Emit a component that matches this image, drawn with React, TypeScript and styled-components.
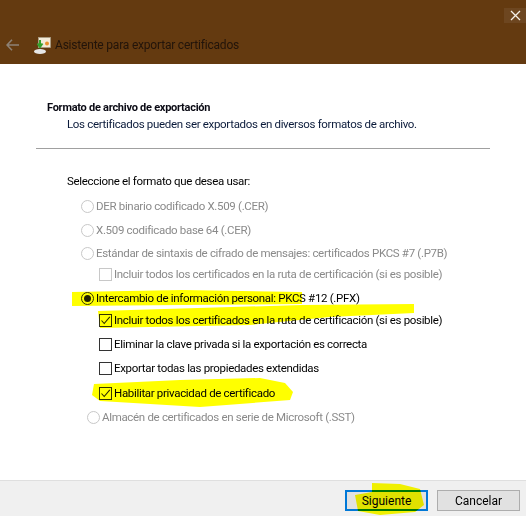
import React from 'react';
import styled, { createGlobalStyle } from 'styled-components';

const GlobalStyle = createGlobalStyle`
    html, body {
        margin: 0;
        padding: 0;
        background: #fff;
    }
    body {
        font-family: Roboto, "Noto Sans", "Liberation Sans", sans-serif;
        font-size: 11.5px;
        letter-spacing: -0.32px;
        color: #000;
    }
`;

const BackArrow = () => (
    <svg width="13" height="12" viewBox="0 0 13 12">
        <path d="M6 0.8 L1 6 L6 11.2 M1.5 6 H13" fill="none" stroke="#8d8175" strokeWidth="1.6" />
    </svg>
);

const WizardIcon = () => (
    <svg width="17" height="17" viewBox="0 0 17 17">
        <rect x="4.5" y="0.5" width="12" height="10" fill="#f3ead8" stroke="#a89c84" strokeWidth="0.8" />
        <circle cx="13" cy="6.5" r="2" fill="#e8902a" />
        <ellipse cx="6" cy="14.5" rx="6" ry="2.5" fill="#e6e6e6" />
        <path d="M6 3 V9 M3.5 6.5 L6 10 L8.5 6.5" fill="none" stroke="#35a02c" strokeWidth="2" />
    </svg>
);

const CloseIcon = () => (
    <svg width="11" height="11" viewBox="0 0 11 11">
        <path d="M1 1 L10 10 M10 1 L1 10" stroke="#f4efe8" strokeWidth="1.3" />
    </svg>
);

const Check = () => (
    <svg width="11" height="11" viewBox="0 0 11 11">
        <path d="M1.5 5.5 L4.2 8.5 L9.8 1.8" fill="none" stroke="#2a2a2a" strokeWidth="1.1" />
    </svg>
);

const HIGHLIGHTS = {
    pkcs: { left: -9, top: 0, width: 230, height: 16, d: 'M0 2 L110 0 L230 2 L230 14 L110 15 L0 16 Z' },
    incluir: { left: -1, top: -8, width: 316, height: 24, d: 'M0 7 L204 1 L316 0 L316 9 L232 13 L152 21 L2 24 Z' },
    habilitar: { left: -7, top: -7, width: 201, height: 29, d: 'M2 6 L88 2 L168 0 L193 5 L201 14 L198 22 L108 29 L8 23 L0 17 Z' },
    siguiente: { left: 8, top: -9, width: 69, height: 32, d: 'M17 0 L45 1 L65 6 L69 22 L60 29 L25 32 L3 28 L0 12 L17 9 Z' },
};

const Marker = ({ kind }: { kind: keyof typeof HIGHLIGHTS }) => {
    const h = HIGHLIGHTS[kind];
    return (
        <MarkerSvg $left={h.left} $top={h.top} width={h.width} height={h.height}>
            <path d={h.d} fill="#ffff00" />
        </MarkerSvg>
    );
};

const Radio = ({ checked, disabled }: { checked?: boolean; disabled?: boolean }) => (
    <RadioCircle $disabled={disabled}>{checked && <RadioDot />}</RadioCircle>
);

interface ICheckRow {
    label: string;
    gap: number;
    checked?: boolean;
    disabled?: boolean;
    marker?: keyof typeof HIGHLIGHTS;
}

const CheckRow = ({ label, gap, checked, disabled, marker }: ICheckRow) => (
    <SubRow $gap={gap}>
        <CheckBox $disabled={disabled}>{checked && <Check />}</CheckBox>
        <RowLabel $disabled={disabled}>{label}</RowLabel>
        {marker && <Marker kind={marker} />}
    </SubRow>
);

const App = () => {
    return (
        <Window>
            <GlobalStyle />
            <Header>
                <CloseButton><CloseIcon /></CloseButton>
                <TitleBar>
                    <BackArrow />
                    <WizardIcon />
                    <Title>Asistente para exportar certificados</Title>
                </TitleBar>
            </Header>
            <Body>
                <Heading>Formato de archivo de exportación</Heading>
                <Description>Los certificados pueden ser exportados en diversos formatos de archivo.</Description>
                <Rule />
                <Options>
                    <Prompt>Seleccione el formato que desea usar:</Prompt>
                    <OptionRow $gap={9}>
                        <Radio disabled />
                        <RowLabel $disabled>DER binario codificado X.509 (.CER)</RowLabel>
                    </OptionRow>
                    <OptionRow $gap={8}>
                        <Radio disabled />
                        <RowLabel $disabled>X.509 codificado base 64 (.CER)</RowLabel>
                    </OptionRow>
                    <OptionRow $gap={7}>
                        <Radio disabled />
                        <RowLabel $disabled>Estándar de sintaxis de cifrado de mensajes: certificados PKCS #7 (.P7B)</RowLabel>
                    </OptionRow>
                    <CheckRow gap={5} disabled label="Incluir todos los certificados en la ruta de certificación (si es posible)" />
                    <OptionRow $gap={8}>
                        <Radio checked />
                        <RowLabel>Intercambio de información personal: PKCS #12 (.PFX)</RowLabel>
                        <Marker kind="pkcs" />
                    </OptionRow>
                    <CheckRow gap={6} checked marker="incluir" label="Incluir todos los certificados en la ruta de certificación (si es posible)" />
                    <CheckRow gap={8} label="Eliminar la clave privada si la exportación es correcta" />
                    <CheckRow gap={8} label="Exportar todas las propiedades extendidas" />
                    <CheckRow gap={9} checked marker="habilitar" label="Habilitar privacidad de certificado" />
                    <LastRow $gap={8}>
                        <Radio disabled />
                        <RowLabel $disabled>Almacén de certificados en serie de Microsoft (.SST)</RowLabel>
                    </LastRow>
                </Options>
            </Body>
            <Footer>
                <PrimaryButton>
                    Siguiente
                    <Marker kind="siguiente" />
                </PrimaryButton>
                <SecondaryButton>Cancelar</SecondaryButton>
            </Footer>
        </Window>
    );
};

export default App;

/*-----------------STYLES-----------------*/
const Window = styled.div`
    width: 526px;
    height: 516px;
    display: flex;
    flex-direction: column;
    overflow: hidden;
    background: #fff;
`;

const Header = styled.div`
    height: 64px;
    background: #643a10;
    position: relative;
    display: flex;
    align-items: flex-end;
    flex-shrink: 0;
`;

const CloseButton = styled.div`
    position: absolute;
    top: 8px;
    right: 0;
    width: 22px;
    height: 15px;
    background: #6d4620;
    display: flex;
    align-items: center;
    justify-content: center;
`;

const TitleBar = styled.div`
    height: 38px;
    padding-left: 6px;
    display: flex;
    align-items: center;
    gap: 15px;
`;

const Title = styled.div`
    color: #22140a;
    font-size: 12px;
    letter-spacing: -0.2px;
    margin-left: -11px;
`;

const Body = styled.div`
    flex: 1;
    padding-top: 37px;
`;

const Heading = styled.div`
    font-weight: 700;
    font-size: 11px;
    letter-spacing: -0.26px;
    line-height: 14px;
    margin-left: 47px;
    color: #0a0a14;
`;

const Description = styled.div`
    line-height: 16px;
    margin: 1px 0 0 67px;
    color: #0a1a3a;
`;

const Rule = styled.div`
    height: 1px;
    background: #a0a0a0;
    margin: 16px 36px 0;
`;

const Options = styled.div`
    padding: 24px 0 0 67px;
    display: flex;
    flex-direction: column;
`;

const Prompt = styled.div`
    height: 16px;
    line-height: 16px;
`;

const OptionRow = styled.div<{ $gap: number }>`
    position: relative;
    height: 16px;
    margin: ${p => p.$gap}px 0 0 14px;
    display: flex;
    align-items: center;
    gap: 2px;
`;

const SubRow = styled(OptionRow)`
    margin-left: 32px;
`;

const LastRow = styled(OptionRow)`
    margin-left: 20px;
`;

const RowLabel = styled.span<{ $disabled?: boolean }>`
    white-space: nowrap;
    color: ${p => (p.$disabled ? '#8a8a8a' : '#000')};
`;

const RadioCircle = styled.span<{ $disabled?: boolean }>`
    box-sizing: border-box;
    width: 13px;
    height: 13px;
    border-radius: 50%;
    border: 1px solid ${p => (p.$disabled ? '#c8c8c8' : '#333')};
    display: flex;
    align-items: center;
    justify-content: center;
    flex-shrink: 0;
`;

const RadioDot = styled.span`
    width: 7px;
    height: 7px;
    border-radius: 50%;
    background: #222;
`;

const CheckBox = styled.span<{ $disabled?: boolean }>`
    box-sizing: border-box;
    width: 13px;
    height: 13px;
    border: 1px solid ${p => (p.$disabled ? '#c8c8c8' : '#333')};
    display: flex;
    align-items: center;
    justify-content: center;
    flex-shrink: 0;
`;

const MarkerSvg = styled.svg<{ $left: number; $top: number }>`
    position: absolute;
    left: ${p => p.$left}px;
    top: ${p => p.$top}px;
    mix-blend-mode: multiply;
`;

const Footer = styled.div`
    height: 36px;
    box-sizing: border-box;
    background: #f0f0f0;
    border-top: 1px solid #dfdfdf;
    display: flex;
    justify-content: flex-end;
    align-items: flex-start;
    gap: 9px;
    padding: 9px 6px 0 0;
    flex-shrink: 0;
    font-size: 12px;
    letter-spacing: 0;
`;

const SecondaryButton = styled.div`
    box-sizing: border-box;
    width: 83px;
    height: 21px;
    background: #e1e1e1;
    border: 1px solid #adadad;
    display: flex;
    align-items: center;
    justify-content: center;
`;

const PrimaryButton = styled(SecondaryButton)`
    position: relative;
    border: 2px solid #0078d7;
`;
